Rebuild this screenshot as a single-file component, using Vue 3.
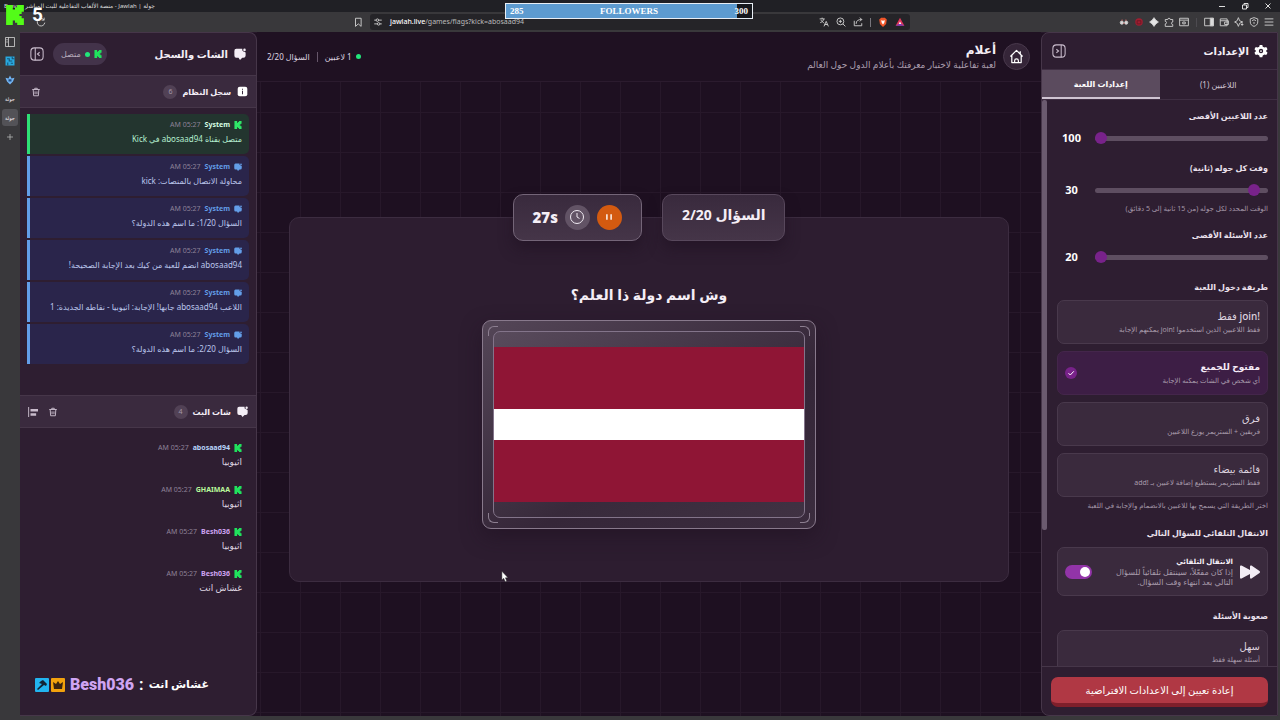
<script setup>
import { ref } from 'vue'

const logs = [
  { kick: true, text: 'متصل بقناة abosaad94 في Kick' },
  { text: 'محاولة الاتصال بالمنصات: kick' },
  { text: 'السؤال 1/20: ما اسم هذه الدولة؟' },
  { text: 'abosaad94 انضم للعبة من كيك بعد الإجابة الصحيحة!' },
  { text: 'اللاعب abosaad94 جابها! الإجابة: اثيوبيا - نقاطه الجديدة: 1' },
  { text: 'السؤال 2/20: ما اسم هذه الدولة؟' },
]
const messages = [
  { user: 'abosaad94', tone: 'blue', text: 'اثيوبيا' },
  { user: 'GHAIMAA', tone: 'lime', text: 'اثيوبيا' },
  { user: 'Besh036', tone: 'violet', text: 'اثيوبيا' },
  { user: 'Besh036', tone: 'violet', text: 'غشاش انت' },
]
const modes = [
  { id: 'join', title: '!join فقط', note: 'فقط اللاعبين الذين استخدموا !join يمكنهم الإجابة' },
  { id: 'open', title: 'مفتوح للجميع', note: 'أي شخص في الشات يمكنه الإجابة' },
  { id: 'teams', title: 'فرق', note: 'فريقين + الستريمر يوزع اللاعبين' },
  { id: 'list', title: 'قائمة بيضاء', note: 'فقط الستريمر يستطيع إضافة لاعبين بـ !add' },
]
const mode = ref('open')
const players = ref(100)
const seconds = ref(30)
const questions = ref(20)
const auto = ref(true)
</script>

<template>
  <div class="screen">
    <svg class="defs" aria-hidden="true">
      <symbol id="kick" viewBox="0 0 24 24"><path d="M1.333 0h8v5.333H12V2.667h2.667V0h8v8H20v2.667h-2.667v2.666H20V16h2.667v8h-8v-2.667H12v-2.666H9.333V24h-8z" fill="currentColor" /></symbol>
      <symbol id="chat" viewBox="0 0 16 16"><path d="M4 1h7q-.5 3 1.500 3.500T15.500 6v4a3 3 0 0 1-3 3H11l-3 3-2-3H4a3 3 0 0 1-3.500-3V4A3 3 0 0 1 4 1z" fill="currentColor" /><circle cx="14" cy="2.500" r="1.700" fill="currentColor" /></symbol>
      <symbol id="trash" viewBox="0 0 16 16"><path d="M2 4h12M6 4V2h4v2M3.500 4l.7 10h7.600l.7-10M6.500 7v4.500M9.500 7v4.500" fill="none" stroke="currentColor" stroke-width="1.500" /></symbol>
      <symbol id="panel" viewBox="0 0 16 16"><rect x="1" y="1" width="14" height="14" rx="4" fill="none" stroke="currentColor" stroke-width="1.200" /><path d="M10.500 1v14M5 6l2.500 2L5 10" fill="none" stroke="currentColor" stroke-width="1.200" /></symbol>
      <symbol id="panel-left" viewBox="0 0 16 16"><rect x="1" y="1" width="14" height="14" rx="4" fill="none" stroke="currentColor" stroke-width="1.200" /><path d="M6 1v14M11 6L8.500 8l2.500 2" fill="none" stroke="currentColor" stroke-width="1.200" /></symbol>
    </svg>

    <header class="titlebar">
      <span class="title" dir="rtl">جولة | Jawlah - منصة الألعاب التفاعلية للبث المباشر - Brave</span>
      <span class="window">
        <button aria-label="Minimize"><svg viewBox="0 0 10 10"><path d="M2 5.500h6" /></svg></button>
        <button aria-label="Restore"><svg viewBox="0 0 10 10"><path d="M2.500 4h4v4h-4zM4 4V2.500h4v4H6.500" /></svg></button>
        <button aria-label="Close"><svg viewBox="0 0 10 10"><path d="M2.500 2.500l5 5M7.500 2.500l-5 5" /></svg></button>
      </span>
    </header>

    <div class="toolbar">
      <div class="nav">
        <button class="ti" aria-label="Reload"><svg viewBox="0 0 16 16"><path d="M13 5a6 6 0 1 0 1 4M13 1v4H9" /></svg></button>
        <button class="ti" aria-label="Bookmark"><svg viewBox="0 0 16 16"><path d="M4 2h9v13l-4.500-4L4 15z" /></svg></button>
      </div>
      <div class="address">
        <svg class="ic" viewBox="0 0 16 16"><path d="M2 5h3M9 5h5M2 11h5M11 11h3" /><circle cx="7" cy="5" r="2" /><circle cx="9" cy="11" r="2" /></svg>
        <span class="url"><b>jawlah.live</b>/games/flags?kick=abosaad94</span>
        <svg class="ic" viewBox="0 0 16 16"><path d="M1 3h8M5 1v2M2 9c3-1 5-3 6-6M3 5l5 5M8 15l3.500-8 3.500 8M9 12h5" /></svg>
        <svg class="ic" viewBox="0 0 16 16"><circle cx="7" cy="7" r="5.500" /><path d="M11 11l4 4M4.500 7h5M7 4.500v5" /></svg>
        <svg class="ic" viewBox="0 0 16 16"><path d="M2 6v8h12v-4M5 11c0-5 3-7 9-7M11 1l3 3-3 3" /></svg>
        <i class="rule"></i>
        <svg class="ic" viewBox="0 0 16 16"><path class="lion" d="M5 1h6l3 3-1 7-5 5-5-5-1-7z" /><path class="face" d="M5 5l3 1 3-1-1 4-2 3-2-3z" /></svg>
        <svg class="ic" viewBox="0 0 16 16"><path class="bat1" d="M8 1l7 13H1z" /><path class="bat2" d="M1 14l7-4 7 4z" /><path class="face" d="M8 7l2 4H6z" /></svg>
      </div>
      <div class="tools">
        <svg class="ic" viewBox="0 0 16 16"><circle cx="4.500" cy="9" r="2.500" fill="#d8d8d8" /><circle cx="11.500" cy="9" r="2.500" fill="#d8d8d8" /><path d="M4 5h2M10 5h2M7 10h2" stroke="#d66" /></svg>
        <svg class="ic" viewBox="0 0 16 16"><circle class="rec" cx="8" cy="8" r="6" /><path d="M5 6h6v5H5z" stroke="#6d1725" /></svg>
        <svg class="ic" viewBox="0 0 16 16"><path fill="#e5e5e5" d="M8 1l3 4 4 3-4 3-3 4-3-4-4-3 4-3z" /></svg>
        <svg class="ic" viewBox="0 0 16 16"><path d="M2 4h4a2 2 0 1 1 4 0h4v4a2 2 0 1 0 0 4v3H2v-4a2 2 0 1 0 0-4z" /></svg>
        <svg class="ic" viewBox="0 0 16 16"><path d="M1 2h14v12H1zM1 5h14M6 8h4v3H6z" /></svg>
        <i class="rule wide"></i>
        <svg class="ic" viewBox="0 0 16 16"><path d="M1 2h14v12H1z" /><path fill="#ddd" d="M10 2h5v12h-5z" /></svg>
        <svg class="ic" viewBox="0 0 16 16"><path d="M2 3h11v11H2zM2 6h13v6H9V8h6" /></svg>
        <svg class="ic" viewBox="0 0 16 16"><path d="M7 1l2 5 5 2-5 2-2 5-2-5-4-2 4-2zM13 10v4M11 12h4" /></svg>
        <svg class="ic" viewBox="0 0 16 16"><path d="M8 1l6 2v5c0 4-3 6-6 7-3-1-6-3-6-7V3zM5 6c2-2 4-2 6 0M8 8v3" /></svg>
        <svg class="ic" viewBox="0 0 16 16"><path d="M1 3h14M1 8h14M1 13h14" /></svg>
      </div>
    </div>

    <div class="workspace">
      <nav class="rail" aria-label="Tabs">
        <button aria-label="Sidebar"><svg viewBox="0 0 16 16"><path d="M2 2h12v12H2zM6 2v12M3 5h2M3 8h2" fill="none" stroke="#ddd" /></svg></button>
        <button aria-label="Tab 1"><svg viewBox="0 0 16 16"><path fill="#28a9df" d="M2 2h12v12H2z" /><path fill="none" stroke="#185777" stroke-width="1.500" d="M4 5h3v3h4M5 14v-4M11 2v3h3M9 11h3" /></svg></button>
        <button aria-label="Tab 2"><svg viewBox="0 0 16 16"><path fill="#73b5f2" d="M8 2l2 4 4-1-2 5-4 4-4-4-2-5 4 1z" /><path fill="#215089" d="M6 7h4v3H6z" /></svg></button>
        <button>جولة</button>
        <button class="current">جولة</button>
        <button aria-label="New tab"><svg viewBox="0 0 16 16"><path d="M8 4v8M4 8h8" stroke="#bbb" /></svg></button>
      </nav>

      <div class="page" dir="rtl">
        <aside class="panel settings">
          <div class="s-head">
            <h2><svg viewBox="0 0 16 16"><path fill="#fff" fill-rule="evenodd" d="M6.500 1h3l.5 2 2 1 2-.5L15.500 6 14 7.500v1l1.500 1.500-1.500 2.500-2-.5-2 1-.5 2h-3L6 13l-2-1-2 .5L.5 10 2 8.500v-1L.5 6 2 3.500 4 4l2-1zM8 5.500a2.500 2.500 0 1 0 0 5 2.500 2.500 0 0 0 0-5z" /><circle cx="8" cy="8" r="1" fill="#fff" /></svg>الإعدادات</h2>
            <button class="icon-btn" aria-label="طي الإعدادات"><svg><use href="#panel" /></svg></button>
          </div>
          <div class="tabs">
            <button>اللاعبين (1)</button>
            <button class="active">إعدادات اللعبة</button>
          </div>
          <div class="scroll">
            <i class="thumb"></i>
            <div class="field">
              <label for="players">عدد اللاعبين الأقصى</label>
              <div class="range"><input id="players" v-model="players" type="range" min="2" max="100" /><output>{{ players }}</output></div>
            </div>
            <div class="field">
              <label for="seconds">وقت كل جوله (ثانية)</label>
              <div class="range"><input id="seconds" v-model="seconds" type="range" min="15" max="300" /><output>{{ seconds }}</output></div>
              <p class="help">الوقت المحدد لكل جوله (من 15 ثانية إلى 5 دقائق)</p>
            </div>
            <div class="field">
              <label for="questions">عدد الأسئلة الأقصى</label>
              <div class="range"><input id="questions" v-model="questions" type="range" min="1" max="20" /><output>{{ questions }}</output></div>
            </div>
            <h3>طريقة دخول اللعبة</h3>
            <div class="modes">
              <button v-for="m in modes" :key="m.id" class="option" :class="{ chosen: mode === m.id }" @click="mode = m.id">
                <span class="words"><b>{{ m.title }}</b><small>{{ m.note }}</small></span>
                <svg v-if="mode === m.id" class="check" viewBox="0 0 12 12"><path d="M3.500 6.200l1.800 1.800 3.500-3.700" /></svg>
              </button>
            </div>
            <p class="help">اختر الطريقة التي يسمح بها للاعبين بالانضمام والإجابة في اللعبة</p>
            <h3>الانتقال التلقائي للسؤال التالي</h3>
            <label class="auto">
              <svg class="ff" viewBox="0 0 20 14"><path d="M0 1.500Q0 0 1.500 .5L10 5V1.500Q10 0 11.500 .5l8 5.500q1 1 0 2l-8 5.500Q10 14 10 12.500V9l-8.500 4.500Q0 14 0 12.500z" fill="#f3edf5" /></svg>
              <span class="words"><b>الانتقال التلقائي</b><small>إذا كان مفعّلاً، سينتقل تلقائياً للسؤال التالي بعد انتهاء وقت السؤال.</small></span>
              <input v-model="auto" type="checkbox" />
            </label>
            <h3>صعوبة الأسئلة</h3>
            <button class="option"><span class="words"><b>سهل</b><small>أسئلة سهلة فقط</small></span></button>
          </div>
          <div class="foot"><button>إعادة تعيين إلى الاعدادات الافتراضية</button></div>
        </aside>

        <main class="game">
          <header class="g-head">
            <a class="home" href="#" aria-label="الرئيسية"><svg viewBox="0 0 16 16"><path d="M1.500 8L8 1.500 14.500 8M3 7v7.500h10V7M6 14v-1.500a2 2 0 0 1 4 0V14M12 5V2.500" /></svg></a>
            <div class="names"><h1>أعلام</h1><p>لعبة تفاعلية لاختبار معرفتك بأعلام الدول حول العالم</p></div>
            <div class="status"><i class="dot"></i><span>1 لاعبين</span><i class="bar"></i><span>السؤال 2/20</span></div>
          </header>
          <div class="stage">
            <section class="card">
              <div class="pills">
                <div class="pill count">السؤال 2/20</div>
                <div class="pill timer">
                  <button class="pause" aria-label="إيقاف مؤقت"><svg viewBox="0 0 10 10"><path d="M3.500 3v4M6.500 3v4" /></svg></button>
                  <span class="clock"><svg viewBox="0 0 16 16"><circle cx="8" cy="8" r="6.500" /><path d="M8 4v4l2.500 1.500" /></svg></span>
                  <strong>27s</strong>
                </div>
              </div>
              <h2>وش اسم دولة ذا العلم؟</h2>
              <div class="frame">
                <i class="c tl"></i><i class="c tr"></i><i class="c bl"></i><i class="c br"></i>
                <div class="glass"><div class="flag" role="img" aria-label="علم"></div></div>
              </div>
            </section>
          </div>
        </main>

        <aside class="panel chat">
          <div class="c-head">
            <h2><svg><use href="#chat" /></svg>الشات والسجل</h2>
            <span class="online"><svg class="k"><use href="#kick" /></svg><i class="dot"></i>متصل</span>
            <button class="icon-btn" aria-label="طي الشات"><svg><use href="#panel-left" /></svg></button>
          </div>
          <div class="bar-head">
            <h3><svg viewBox="0 0 16 16"><rect x="1" y="1" width="14" height="14" rx="3" fill="#fff" /><path d="M8 7v5M8 4v1.500" stroke="#39293d" stroke-width="1.500" /></svg>سجل النظام</h3>
            <span class="badge">6</span>
            <button class="mini" aria-label="مسح السجل"><svg><use href="#trash" /></svg></button>
          </div>
          <ul class="logs">
            <li v-for="(l, i) in logs" :key="i" :class="{ kick: l.kick }">
              <div class="meta"><svg><use :href="l.kick ? '#kick' : '#chat'" /></svg><b>System</b><time>05:27 AM</time></div>
              <p>{{ l.text }}</p>
            </li>
          </ul>
          <div class="bar-head pair">
            <h3><svg><use href="#chat" /></svg>شات البث</h3>
            <span class="badge">4</span>
            <button class="mini" aria-label="مسح الشات"><svg><use href="#trash" /></svg></button>
            <button class="mini" aria-label="محاذاة"><svg viewBox="0 0 16 16"><path d="M1 0v16" stroke="currentColor" stroke-width="1.500" /><path d="M4 3h12v4H4zM4 10h9v4H4z" fill="currentColor" /></svg></button>
          </div>
          <ul class="messages">
            <li v-for="(m, i) in messages" :key="i">
              <div class="meta"><svg class="k"><use href="#kick" /></svg><b :class="m.tone">{{ m.user }}</b><time>05:27 AM</time></div>
              <p>{{ m.text }}</p>
            </li>
          </ul>
        </aside>
      </div>
    </div>

    <div class="viewers"><svg><use href="#kick" /></svg><b>5</b></div>
    <div class="followers"><span>285</span><span>FOLLOWERS</span><span>300</span></div>
    <div class="overlay-chat">
      <svg viewBox="0 0 14 14"><rect width="14" height="14" rx="1" fill="#22b5ef" /><path d="M6 3l2-1 4 4-1 2-2-1-6 5-1-1 5-5-3-1z" fill="#122535" /></svg>
      <svg viewBox="0 0 14 14"><rect width="14" height="14" rx="1" fill="#f2a20d" /><path d="M2 4l3 2 2-3 2 3 3-2-1 7H3z" fill="#3a2410" /></svg>
      <b>Besh036</b><span>:</span><span dir="rtl">غشاش انت</span>
    </div>
    <svg class="cursor" viewBox="0 0 8 12"><path d="M1 0v10l2-2 2 4 1.500-1L5 7.500h3z" fill="#fff" stroke="#222" stroke-width=".5" /></svg>
  </div>
</template>

<style>
body { background: #1f1122; }
</style>

<style scoped>
* { box-sizing: border-box; }
h1, h2, h3, p, ul { margin: 0; padding: 0; }
ul { list-style: none; }
button { border: 0; padding: 0; background: none; color: inherit; font: inherit; }
svg { display: block; flex: none; }
.screen { position: relative; display: flex; flex-direction: column; height: 100vh; overflow: hidden; background: #39383b; color: #f4eef6; font-family: "Noto Sans", "DejaVu Sans", sans-serif; font-size: 8px; line-height: 12px; }
.defs { position: absolute; width: 0; height: 0; }

.titlebar { display: flex; justify-content: space-between; height: 12px; background: #202025; color: #ddd; font-size: 6px; padding: 0 7px 0 4px; }
.title { white-space: nowrap; }
.window { display: flex; gap: 13px; }
.window svg { width: 10px; height: 10px; fill: none; stroke: #ddd; stroke-width: 1; }
.toolbar { display: grid; grid-template-columns: 1fr minmax(0, 540px) 1fr; align-items: center; height: 20px; }
.nav { display: flex; justify-content: space-between; padding: 0 7px 0 36px; }
.ti svg, .ic { width: 10px; height: 10px; fill: none; stroke: #ccc; stroke-width: 1.500; }
.address { display: flex; align-items: center; gap: 7px; height: 16px; padding: 0 5px 0 3px; border-radius: 3px; background: #252428; color: #bbb; }
.url { flex: 1; font-size: 7px; }
.url b { font-weight: 500; color: #fff; }
.rule { width: 1px; height: 9px; background: #77757c; }
.rule.wide { margin: 0 2px; background: #4d4b50; }
.lion { fill: #f0562a; stroke: none; }
.face { fill: #fff; stroke: none; }
.bat1 { fill: #e0355a; stroke: none; }
.bat2 { fill: #7a3bb5; stroke: none; }
.rec { fill: #a01e30; stroke: none; }
.tools { display: flex; justify-content: flex-end; align-items: center; gap: 5px; padding-right: 6px; }

.workspace { flex: 1; display: flex; min-height: 0; padding: 0 2px 4px 0; }
.rail { width: 20px; padding-top: 1px; display: flex; flex-direction: column; align-items: center; gap: 2px; font-size: 5px; }
.rail button { display: grid; place-items: center; width: 16px; height: 17px; border-radius: 3px; }
.rail svg { width: 12px; height: 12px; }
.rail .current { background: #535257; }
.page { flex: 1; display: grid; grid-template-columns: 237px minmax(0, 1fr) 237px; min-width: 0; background-color: #1e1021; background-image: linear-gradient(#27182a 1px, transparent 1px), linear-gradient(90deg, #27182a 1px, transparent 1px); background-size: 40px 40px; }
.panel { display: flex; flex-direction: column; min-height: 0; background: #2e1e31; border: 1px solid #463649; }

.settings { border-radius: 8px 0 0 8px; overflow: hidden; }
.s-head { display: flex; justify-content: space-between; align-items: center; height: 37px; padding: 0 9px 0 10px; border-bottom: 1px solid #3f2f43; }
.s-head h2, .c-head h2 { display: flex; align-items: center; gap: 5px; font-size: 10px; line-height: 16px; white-space: nowrap; }
.s-head h2 svg { width: 14px; height: 14px; }
.icon-btn { color: #c9bccc; }
.icon-btn svg { width: 14px; height: 14px; }
.tabs { display: grid; grid-template-columns: 1fr 1fr; height: 30px; border-bottom: 1px solid #3f2f43; color: #cfc4d2; }
.tabs .active { background: #5b4b5e; color: #fff; font-weight: 700; border-bottom: 2px solid #cfc4d2; }
.scroll { position: relative; flex: 1; min-height: 0; overflow: hidden; padding: 10px 9px 0 15px; }
.thumb { position: absolute; left: 0; top: 0; width: 5px; height: 76%; background: #6b5b6f; border-radius: 2px; }
.field { padding-bottom: 17px; }
.field:has(.help) { padding-bottom: 15px; }
.field > label, .scroll h3 { display: block; font-size: 8px; line-height: 12px; font-weight: 700; color: #eae1ec; }
.range { display: flex; align-items: center; gap: 9px; height: 14px; margin-top: 9px; }
.range input { appearance: none; flex: 1; min-width: 0; height: 12px; margin: 0; background: transparent; }
.range input::-webkit-slider-runnable-track { height: 5px; border-radius: 3px; background: #5e4e61; }
.range input::-webkit-slider-thumb { appearance: none; width: 12px; height: 12px; margin-top: -4px; border-radius: 50%; background: #78228a; }
.range output { width: 29px; text-align: center; font-size: 11px; font-weight: 700; color: #fff; }
.field .help { margin-top: 7px; }
.help { font-size: 7px; line-height: 10px; color: #a497a8; white-space: nowrap; }
.modes { display: grid; gap: 7px; margin: 7px 0 4px; }
.option { display: flex; justify-content: space-between; align-items: center; width: 100%; height: 44px; padding: 0 7px; border: 1px solid #49394c; border-radius: 7px; background: #3a2a3d; text-align: start; }
.option.chosen { background: #3d1e45; border-color: #44264b; }
.words { display: block; min-width: 0; }
.option b { display: block; font-size: 10px; line-height: 16px; font-weight: 500; color: #ddd2df; }
.option.chosen b { font-size: 9px; font-weight: 700; color: #f5ecf7; }
small { display: block; font-size: 7px; line-height: 12px; color: #a99cac; }
.check { width: 12px; height: 12px; border-radius: 50%; background: #78228a; fill: none; stroke: #fff; stroke-width: 1; }
.modes + .help + h3 { margin: 16px 0 8px; }
.auto { display: flex; align-items: center; gap: 7px; height: 49px; padding: 0 7px; border: 1px solid #49394c; border-radius: 7px; background: #3a2a3d; }
.auto + h3 { margin: 14px 0 8px; }
.ff { width: 20px; height: 14px; }
.auto .words { flex: 1; }
.auto b { display: block; font-size: 7px; line-height: 10px; }
.auto small { font-size: 8px; line-height: 10px; max-width: 125px; }
.auto input { appearance: none; position: relative; width: 27px; height: 14px; margin: 0; border-radius: 7px; background: #9234a8; }
.auto input::after { content: ""; position: absolute; right: 2px; top: 2px; width: 10px; height: 10px; border-radius: 50%; background: #fff; }
.foot { padding: 10px 9px 8px; border-top: 1px solid #463649; }
.foot button { width: 100%; height: 30px; border-radius: 7px; background: #b03844; border-bottom: 4px solid #7e1f2b; color: #fff; font-size: 10px; }

.game { display: flex; flex-direction: column; min-width: 0; }
.g-head { display: flex; align-items: center; gap: 7px; height: 50px; padding: 0 11px 0 10px; background: #1f1122; border-bottom: 1px solid #2b1b2e; }
.home { display: grid; place-items: center; width: 27px; height: 27px; border: 1px solid #49394c; border-radius: 50%; background: #352538; }
.home svg { width: 15px; height: 15px; fill: none; stroke: #fff; stroke-width: 1.300; stroke-linejoin: round; }
.names { flex: 1; }
.names h1 { font-size: 12px; line-height: 16px; }
.names p { font-size: 9px; line-height: 14px; color: #a99cac; }
.status { display: flex; align-items: center; gap: 4px; color: #ded4e0; }
.dot { width: 5px; height: 5px; border-radius: 50%; background: #22e57a; }
.bar { width: 1px; height: 10px; margin: 0 3px; background: #66566a; }
.stage { flex: 1; display: flex; align-items: center; padding: 0 32px; }
.card { flex: 1; display: flex; flex-direction: column; align-items: center; padding: 0 20px 52px; border: 1px solid #3c2c40; border-radius: 10px; background: #2d1d30; }
.pills { display: flex; gap: 20px; margin-top: -24px; }
.pill { height: 47px; padding: 0 19px; border: 1px solid #58485c; border-radius: 10px; background: linear-gradient(#392a3d, #453548); box-shadow: 0 8px 14px #1d0f2080; font-weight: 700; }
.count { padding-top: 10px; font-size: 14px; line-height: 20px; }
.timer { display: flex; align-items: center; gap: 7px; border-color: #746578; }
.timer strong { font-size: 15px; direction: ltr; }
.pause, .clock { display: grid; place-items: center; width: 25px; height: 25px; border-radius: 50%; background: #d35a10; }
.clock { background: #625365; }
.pause svg { width: 14px; height: 14px; stroke: #fff; stroke-width: 1; }
.clock svg { width: 16px; height: 16px; fill: none; stroke: #f0eaf2; stroke-width: 1; }
.card h2 { margin: 44px 0 15px; font-size: 14px; line-height: 20px; }
.frame { position: relative; width: 334px; max-width: 100%; padding: 10px; border: 1px solid #88798c; border-radius: 9px; background: linear-gradient(150deg, #544657, #352638 60%, #3b2c3e); box-shadow: 0 8px 20px #1d0f2080; }
.glass { padding: 15px 0; border: 1px solid #83748a; border-radius: 7px; background: linear-gradient(150deg, #594b5c, #382a3b 60%, #403243); }
.flag { aspect-ratio: 2 / 1; background: linear-gradient(#8f1535 40%, #fff 40% 60%, #8f1535 60%); }
.c { position: absolute; width: 10px; height: 10px; border: 0 solid #8c7e90; }
.tl { left: 5px; top: 5px; border-width: 1px 0 0 1px; border-top-left-radius: 6px; }
.tr { right: 5px; top: 5px; border-width: 1px 1px 0 0; border-top-right-radius: 6px; }
.bl { left: 5px; bottom: 5px; border-width: 0 0 1px 1px; border-bottom-left-radius: 6px; }
.br { right: 5px; bottom: 5px; border-width: 0 1px 1px 0; border-bottom-right-radius: 6px; }

.chat { border-left: 0; border-radius: 0 8px 8px 0; overflow: hidden; }
.c-head { display: flex; align-items: center; height: 42px; padding: 0 10px; }
.c-head h2 { margin-left: auto; gap: 6px; }
.c-head h2 svg { width: 12px; height: 12px; }
.online { display: flex; align-items: center; gap: 4px; height: 22px; margin-left: 9px; padding: 0 5px 0 8px; border-radius: 11px; background: #43334a; color: #b9adbd; }
.k { color: #20e35d; }
.online svg { width: 8px; height: 8px; }
.bar-head { display: flex; align-items: center; gap: 10px; height: 33px; padding: 0 8px 0 11px; background: #3a2a3e; border: 1px solid #463649; border-width: 1px 0; }
.bar-head.pair { padding-left: 8px; }
.bar-head h3 { display: flex; align-items: center; gap: 6px; font-size: 8px; }
.bar-head h3 svg { width: 11px; height: 11px; }
.badge { display: grid; place-items: center; width: 14px; height: 14px; margin-left: auto; margin-right: -5px; border-radius: 50%; background: #514155; color: #a497a8; font-size: 7px; }
.mini { color: #c9bccc; }
.mini svg { width: 10px; height: 10px; }
.logs { display: grid; gap: 2px; align-content: start; height: 287px; padding: 6px 7px 0; }
.logs li { height: 40px; padding: 5px 7px 0; border-left: 3px solid #639ee8; border-radius: 0 5px 5px 0; background: #2a254b; color: #bcc7ed; }
.logs li.kick { background: #23352f; border-color: #2fdc76; color: #b5efd0; }
.meta { display: flex; align-items: center; gap: 4px; height: 12px; color: #639ee8; font-size: 7px; }
.kick .meta { color: #2fe868; }
.kick .meta b { color: #d7ffe5; }
.meta svg { width: 8px; height: 8px; }
.meta time { color: #8e8298; }
li p { font-size: 8px; line-height: 16px; white-space: nowrap; }
.messages { display: grid; gap: 14px; padding: 14px; color: #ded4e0; }
.messages p { font-size: 9px; }
.messages .meta svg { color: #20e35d; }
.messages .blue { color: #b8d3fa; }
.messages .lime { color: #b9f99b; }
.messages .violet { color: #cfa4f2; }

.viewers { position: absolute; left: 5px; top: 4px; display: flex; align-items: center; gap: 7px; color: #53fc18; }
.viewers svg { width: 20px; height: 20px; }
.viewers b { color: #fff; font: 700 19px/22px Roboto, sans-serif; }
.followers { position: absolute; left: 505px; top: 3px; display: flex; justify-content: space-between; width: 248px; height: 16px; padding: 0 4px; border: 1px solid #e8eef5; background: linear-gradient(90deg, #5d9bd0 94%, #16181d 94%); color: #fff; font: 700 9px/14px "Liberation Serif", serif; }
.overlay-chat { position: absolute; left: 35px; bottom: 24px; display: flex; align-items: center; gap: 5px; color: #fff; font: 700 16px/22px Roboto, "DejaVu Sans", sans-serif; }
.overlay-chat svg { width: 14px; height: 14px; }
.overlay-chat svg + svg { margin-left: -3px; }
.overlay-chat b { color: #cfa4f2; }
.overlay-chat span:last-child { font-size: 11px; }
.cursor { position: absolute; left: 501px; top: 571px; width: 7px; height: 11px; }
</style>
